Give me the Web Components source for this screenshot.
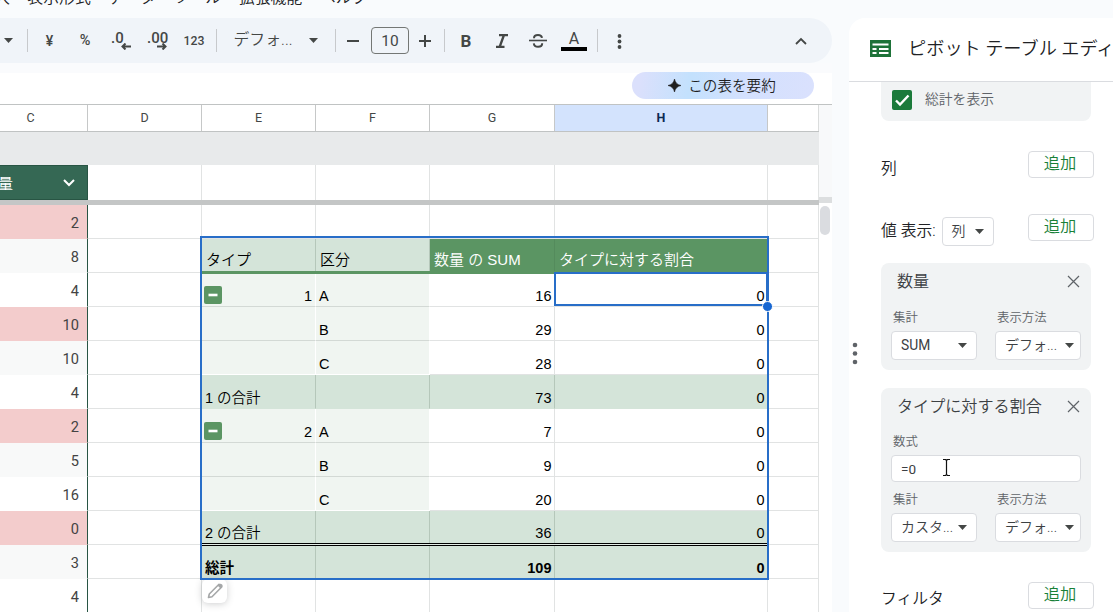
<!DOCTYPE html>
<html lang="ja">
<head>
<meta charset="utf-8">
<title>スプレッドシート</title>
<style>
  html, body {
    margin: 0;
    height: 612px;
    overflow: hidden;
  }
  body {
    background: #f9fbfd;
    color: #202124;
    font-family: Roboto, "Noto Sans CJK JP", sans-serif;
    font-weight: 350;
  }
</style>
</head>
<body>
<sheet-app>
  <menu-bar slot="menu"></menu-bar>
  <tool-bar slot="tools"></tool-bar>
  <summary-chip slot="chip">この表を要約</summary-chip>
  <sheet-grid slot="grid"></sheet-grid>
  <pivot-editor slot="side"></pivot-editor>
</sheet-app>

<script>
  const define = (name, html, setup) => {
    customElements.define(name, class extends HTMLElement {
      constructor() {
        super()
        this.attachShadow({ mode: 'open' })
      }

      connectedCallback() {
        this.shadowRoot.innerHTML = html
        if (setup) setup(this, this.shadowRoot)
      }
    })
  }

  define('drop-arrow', `
    <style>
      :host { display: block; flex: none; width: 9px; height: 5px; }
      svg { display: block; }
    </style>
    <svg width="9" height="5"><path d="M0 0h9L4.5 5z" fill="#444746"/></svg>
  `)

  define('menu-bar', `
    <style>
      :host {
        display: flex;
        gap: 17.5px;
        height: 18px;
        margin-left: -22px;
        font-size: 15.9px;
        line-height: 20px;
        white-space: nowrap;
        overflow: hidden;
      }
      span { margin-top: -12px; }
    </style>
    <span>挿入</span><span>表示形式</span><span>データ</span><span>ツール</span><span>拡張機能</span><span>ヘルプ</span>
  `)

  define('tool-bar', `
    <style>
      :host {
        display: flex;
        align-items: center;
        box-sizing: border-box;
        height: 45px;
        padding: 0 25px 0 4px;
        border-radius: 0 23px 23px 0;
        background: #f0f4f9;
        color: #444746;
        font: 500 14px/18px Roboto, "Noto Sans CJK JP", sans-serif;
        white-space: nowrap;
      }
      :host > * { flex: none; }
      i { width: 1px; height: 23px; background: #c7c9cc; }
      span { display: flex; justify-content: center; }
      svg { display: block; fill: none; stroke: #444746; stroke-width: 2; }
      .size {
        box-sizing: border-box;
        width: 38px;
        height: 27px;
        margin-left: 12px;
        border: 1px solid #747775;
        border-radius: 4px;
        align-items: center;
        font-size: 15.5px;
        font-weight: 400;
      }
      .digits { flex-direction: column; align-items: flex-start; height: 19px; line-height: 14px; font-size: 15px; }
      .digits svg { margin-top: -2px; flex: none; }
      .color { flex-direction: column; align-items: center; width: 26px; margin-left: 14px; font-size: 16px; font-weight: 400; }
      .color b { width: 26px; height: 4px; margin-top: -1px; background: #000; }
    </style>
    <drop-arrow></drop-arrow>
    <i style="margin-left:14px"></i>
    <span style="width:21px;margin-left:11px">¥</span>
    <span style="width:20px;margin-left:15px;font-size:14.5px">%</span>
    <span class="digits" style="width:22px;margin-left:16px">.0
      <svg style="margin-left:10px" width="10" height="7"><path d="M10 3.5H2M4.5 .5l-3 3 3 3"/></svg></span>
    <span class="digits" style="width:22px;margin-left:14px">.00
      <svg style="margin-left:10px" width="10" height="7"><path d="M0 3.5h8M5.5 .5l3 3-3 3"/></svg></span>
    <span style="width:26px;margin-left:12px;font-size:12.3px">123</span>
    <i style="margin-left:9px"></i>
    <span style="width:60px;margin:-2px 0 0 16px;font-size:15.9px;font-weight:350">デフォ...</span>
    <drop-arrow style="margin-left:16px"></drop-arrow>
    <i style="margin-left:17px"></i>
    <svg style="margin-left:11px" width="12" height="12"><path d="M0 6h12"/></svg>
    <span class="size">10</span>
    <svg style="margin-left:10px" width="12" height="12"><path d="M0 6h12M6 0v12"/></svg>
    <i style="margin-left:13px"></i>
    <span style="width:14px;margin-left:14px;font-size:17px;font-weight:700">B</span>
    <svg style="margin-left:22px" width="14" height="14"><path d="M4 1.2h9M1 12.8h8.500M8.800 1.500l-4 11" stroke-width="2.3"/></svg>
    <svg style="margin-left:20px" width="18" height="14" viewBox="0 0 18 14"><path d="M0 6.5h18" stroke-width="1.6"/><path d="M5 4.2C5 2 6.500 1 9 1s3.700 1 4 2.800M4.800 9.300c.3 2.400 1.800 3.500 4.300 3.500 2.600 0 4.100-1.200 4.100-3.500"/></svg>
    <span class="color">A<b></b></span>
    <i style="margin-left:10px"></i>
    <svg style="margin-left:19px" width="5" height="16"><g fill="#444746" stroke="none"><circle cx="2.5" cy="3" r="1.9"/><circle cx="2.5" cy="8.500" r="1.9"/><circle cx="2.5" cy="14" r="1.9"/></g></svg>
    <svg style="margin-left:auto" width="12" height="8"><path d="M1 7l5-5 5 5" stroke-width="1.8"/></svg>
  `)

  define('summary-chip', `
    <style>
      :host {
        display: flex;
        align-items: center;
        justify-content: center;
        gap: 7px;
        box-sizing: border-box;
        width: 182px;
        height: 27px;
        padding-right: 2px;
        border-radius: 14px;
        background: linear-gradient(100deg, #dbe0fc 5%, #c3e1fd 32%, #d3e0fe 62%, #dae1fd);
        font-size: 14.6px;
        line-height: 20px;
        color: #1f1f1f;
      }
    </style>
    <svg width="13" height="13"><path d="M6.500 0Q7.500 5.500 13 6.500 7.500 7.500 6.500 13 5.500 7.500 0 6.500 5.500 5.500 6.500 0z" fill="#1f1f1f" stroke="#1f1f1f" stroke-width=".6"/></svg>
    <slot></slot>
  `)

  define('sheet-app', `
    <style>
      :host { display: flex; height: 612px; }
      main { flex: none; width: 832px; }
      .strip {
        display: flex;
        justify-content: flex-end;
        box-sizing: border-box;
        height: 41px;
        padding: 9px 18px 0 0;
        background: linear-gradient(#fafbfd 10px, #fff 10px);
      }
      aside { flex: none; width: 264px; margin-left: 17px; padding-top: 18px; }
    </style>
    <main>
      <slot name="menu"></slot>
      <slot name="tools"></slot>
      <div class="strip"><slot name="chip"></slot></div>
      <slot name="grid"></slot>
    </main>
    <aside><slot name="side"></slot></aside>
  `)

  define('toggle-box', `
    <style>
      :host { display: block; width: 18px; height: 18px; border-radius: 2px; background: #5b9563; }
      svg { display: block; }
    </style>
    <svg width="18" height="18"><path d="M4.5 9h9" stroke="#fff" stroke-width="2.6"/></svg>
  `)

  define('sheet-cell', `
    <style>
      :host {
        display: flex;
        align-items: flex-end;
        justify-content: space-between;
        box-sizing: border-box;
        min-width: 0;
        padding: 0 3px;
        border-right: 1px solid #e1e3e3;
        border-bottom: 1px solid #e1e3e3;
        color: #000;
        font: 350 14.5px/20px "Liberation Sans", "Noto Sans CJK JP", sans-serif;
        white-space: nowrap;
      }
      :host([num]) { justify-content: flex-end; padding-right: 2.5px; }
      :host([kind~="key"]) { background: #f0f5f1; border-right-color: #fff; border-bottom-color: #d3d9d5; }
      :host([kind~="group"]) { padding: 0 3px 0 2px; }
      :host([kind~="last"]) { border-bottom-color: #fff; }
      :host([kind~="sub"]) { background: #d4e4d9; border-right-color: #b5c7ba; border-bottom-color: #d4e4d9; }
      :host([kind~="raised"]) { padding-bottom: 1px; }
      :host([kind~="measure"]) { background: #5b9563; border-color: #548b5c; color: #fff; }
      :host([kind~="head"]) { padding: 0 3px 2px 4px; font-size: 15px; }
      :host([kind~="total"]) { font-weight: 700; }
      :host([kind~="data"]) {
        align-items: center;
        justify-content: flex-end;
        padding: 2px 8px 0 0;
        border-right-color: #285544;
        border-bottom-color: transparent;
        color: #434343;
        font: 400 14.6px/20px Roboto, sans-serif;
      }
      :host([kind~="pink"]) { background: #f3cccc; }
      :host([kind~="alt"]) { background: #f8f9f9; }
    </style>
    <slot name="toggle"></slot><slot></slot>
  `)

  const columns = [['C', 88], ['D', 114], ['E', 114], ['F', 114], ['G', 125], ['H', 213], ['', 51]]

  // left table: value and band colour
  const amounts = [
    [2, 'pink'], [8, 'alt'], [4, ''], [10, 'pink'], [10, 'alt'], [4, ''],
    [2, 'pink'], [5, 'alt'], [16, ''], [0, 'pink'], [3, 'alt'], [4, '']
  ]

  // pivot rows, one for each sheet row: kind, type, section, sum, ratio
  const pivot = [
    null,
    ['head', 'タイプ', '区分', '数量 の SUM', 'タイプに対する割合'],
    ['item', '1', 'A', '16', '0'],
    ['item', '', 'B', '29', '0'],
    ['last', '', 'C', '28', '0'],
    ['sub', '1 の合計', '', '73', '0'],
    ['item', '2', 'A', '7', '0'],
    ['item', '', 'B', '9', '0'],
    ['last', '', 'C', '20', '0'],
    ['sub raised', '2 の合計', '', '36', '0'],
    ['sub total', '総計', '', '109', '0'],
    null
  ]

  const cell = (text = '', kind = '', num = false) =>
    `<sheet-cell kind="${kind}" ${num ? 'num' : ''}>${text}</sheet-cell>`

  const pivotCells = row => {
    if (!row) return cell().repeat(4)
    const [kind, type, section, sum, ratio] = row
    if (kind === 'head') {
      return cell(type, 'sub head') + cell(section, 'sub head') + cell(sum, 'measure head') + cell(ratio, 'measure head')
    }
    if (kind.startsWith('sub')) {
      return cell(type, kind) + cell(section, kind) + cell(sum, kind, true) + cell(ratio, kind, true)
    }
    const first = type
      ? cell(`<toggle-box slot="toggle" style="margin-bottom:2px"></toggle-box>${type}`, 'key group')
      : cell('', `key ${kind}`)
    return first + cell(section, `key ${kind}`) + cell(sum, '', true) + cell(ratio, '', true)
  }

  define('sheet-grid', `
    <style>
      :host { display: flex; position: relative; height: 508px; background: #fff; overflow: hidden; }
      .sheet { flex: none; width: 819px; }
      .row { display: grid; grid-template-columns: ${columns.map(c => c[1] + 'px').join(' ')}; }
      .names { height: 28px; box-sizing: border-box; border-top: 1px solid #c0c3c3; border-bottom: 1px solid #c0c3c3; }
      .names span {
        border-right: 1px solid #c6c8c8;
        color: #444746;
        font: 400 12.5px/25px Roboto, sans-serif;
        text-align: center;
      }
      .names span:first-child { padding-right: 26px; }
      .names span:last-child { border-color: #dadcdc; }
      .names .on { background: #d3e3fd; color: #0b2a52; font-weight: 700; }
      .band { height: 33px; background: #e8eaeb; }
      .fixed { height: 35px; }
      .fixed sheet-cell { border-bottom: 0; }
      .fixed .title {
        display: flex;
        align-items: center;
        box-sizing: border-box;
        border: 1px solid #285544;
        border-left: 0;
        background: #356854;
        color: #fff;
        font-size: 15px;
        font-weight: 400;
        line-height: 20px;
        overflow: hidden;
      }
      .title span { margin: 2px 0 0 -17px; }
      .title svg { margin-left: auto; margin-right: 12px; }
      .freeze { height: 5px; background: #c4c6c6; }
      .body .row { grid-auto-rows: 34px; }
      .scroll { flex: none; width: 13px; }
      .track { height: 93px; background: #f8f9fa; border-top: 1px solid #c0c3c3; box-sizing: border-box; }
      .stop { height: 6px; background: #dcdedf; }
      .thumb { width: 10px; height: 29px; margin: 3px 0 0 1px; border-radius: 5px; background: #dadce0; }
      /* marks drawn over the cells */
      .mark { position: absolute; box-sizing: border-box; }
      .rule { left: 202px; top: 167px; width: 353px; height: 3px; background: #5b9563; }
      .rule + .rule { left: 429px; width: 338px; }
      .double { left: 202px; top: 439px; width: 565px; height: 3px; border: solid #000; border-width: 1px 0; background: #e4eee7; }
      .range { left: 200px; top: 132px; width: 569px; height: 344px; border: 2px solid #286ec8; }
      .active { left: 554px; top: 168px; width: 214px; height: 34px; border: 2px solid #286ec8; }
      .knob { left: 762px; top: 197px; width: 11px; height: 11px; border: 1px solid #fff; border-radius: 50%; background: #1767d2; }
      .edit {
        display: flex;
        align-items: center;
        justify-content: center;
        left: 202px;
        top: 475px;
        width: 25px;
        height: 24px;
        border-radius: 6px;
        background: #fff;
        box-shadow: 0 1px 7px rgba(60, 64, 67, .25);
      }
    </style>
    <div class="sheet">
      <div class="row names">${columns.map(([name]) => `<span class="${name === 'H' ? 'on' : ''}">${name}</span>`).join('')}</div>
      <div class="band"></div>
      <div class="row fixed">
        <div class="title"><span>数量</span><svg width="12" height="8"><path d="M1 1l5 5 5-5" fill="none" stroke="#fff" stroke-width="2"/></svg></div>
        ${cell().repeat(6)}
      </div>
      <div class="freeze"></div>
      <div class="body">
        ${amounts.map(([n, band], i) => `<div class="row">${cell(n, `data ${band}`)}${cell()}${pivotCells(pivot[i])}${cell()}</div>`).join('')}
      </div>
    </div>
    <div class="scroll"><div class="track"></div><div class="stop"></div><div class="thumb"></div></div>
    <div class="mark rule"></div>
    <div class="mark rule"></div>
    <div class="mark double"></div>
    <div class="mark edit"><svg width="18" height="18"><path d="M2.500 15.500l.8-3.500L13 2.300l2.700 2.700L6 14.700z" fill="none" stroke="#a5a7a8" stroke-width="1.600" stroke-linejoin="round"/><path d="M11.500 3.500l3 3 2-2q.5-1-.4-2t-2.200-.8z" fill="#a5a7a8"/></svg></div>
    <div class="mark range"></div>
    <div class="mark active"></div>
    <div class="mark knob"></div>
  `)

  define('add-button', `
    <style>
      :host {
        display: block;
        box-sizing: border-box;
        width: 66px;
        height: 27px;
        padding-right: 2px;
        border: 1px solid #dadce0;
        border-radius: 4px;
        background: #fff;
        color: #188038;
        font-size: 16.3px;
        line-height: 24px;
        text-align: center;
      }
    </style>
    追加
  `)

  define('select-box', `
    <style>
      :host {
        display: flex;
        align-items: center;
        justify-content: space-between;
        box-sizing: border-box;
        width: 86px;
        height: 29px;
        padding: 0 6px 0 9px;
        border: 1px solid #dadce0;
        border-radius: 4px;
        background: #fff;
        color: #3c4043;
        font-size: 14px;
        line-height: 20px;
        white-space: nowrap;
      }
      slot { display: block; margin-top: -1px; }
      :host([latin]) { font-size: 13.8px; font-weight: 400; }
    </style>
    <slot></slot><drop-arrow></drop-arrow>
  `)

  define('value-card', `
    <style>
      :host {
        display: block;
        box-sizing: border-box;
        width: 210px;
        padding: 8px 10px 10px;
        border-radius: 8px;
        background: #f1f3f4;
        color: #3c4043;
      }
      header { display: flex; align-items: center; justify-content: space-between; height: 20px; padding: 0 0 0 6px; font-size: 16.1px; line-height: 20px; }
      header span { margin-top: 1px; }
      header svg { margin-right: 1px; }
      .fields { display: grid; grid-template-columns: 86px 86px; column-gap: 18px; }
      ::slotted(select-box:first-child) { padding-right: 9px; }
      label { height: 21px; padding-left: 2px; font-size: 12.4px; line-height: 16px; color: #5f6368; }
      .formula { display: none; }
      :host([formula]) .formula { display: block; margin-bottom: 10px; }
      .formula label { display: block; }
      .formula div {
        box-sizing: border-box;
        height: 27px;
        padding-left: 9px;
        border: 1px solid #dadce0;
        border-radius: 4px;
        background: #fff;
        font-size: 13.5px;
        line-height: 26px;
        font-weight: 400;
      }
      .body { padding-top: 19px; }
      :host([formula]) .body { padding-top: 18px; }
    </style>
    <header><span></span><svg width="13" height="13"><path d="M1 1l11 11M12 1L1 12" stroke="#5f6368" stroke-width="1.2"/></svg></header>
    <div class="body">
      <div class="formula"><label>数式</label><div></div></div>
      <div class="fields"><label>集計</label><label>表示方法</label><slot></slot></div>
    </div>
  `, (host, root) => {
    root.querySelector('header span').textContent = host.getAttribute('name')
    root.querySelector('.formula div').textContent = host.getAttribute('formula') || ''
  })

  define('pivot-editor', `
    <style>
      :host { display: block; position: relative; height: 594px; border-radius: 16px 0 0 0; background: #fff; }
      header {
        display: flex;
        align-items: center;
        gap: 17px;
        box-sizing: border-box;
        height: 64px;
        padding: 0 0 2px 21px;
        border-bottom: 1px solid #dadce0;
        font-size: 18.2px;
        line-height: 24px;
        white-space: nowrap;
        overflow: hidden;
      }
      header svg { flex: none; }
      section { padding-left: 32px; }
      .totals {
        display: flex;
        align-items: center;
        gap: 13px;
        box-sizing: border-box;
        width: 210px;
        height: 39px;
        padding: 0 0 3px 11px;
        border-radius: 0 0 8px 8px;
        background: #f1f3f4;
        color: #5f6368;
        font-size: 13.8px;
        line-height: 20px;
      }
      .totals span { margin-top: -2px; }
      .line { display: flex; align-items: center; width: 213px; font-size: 15.8px; line-height: 20px; }
      .line add-button { margin-left: auto; }
      .line select-box { width: 52px; margin: 3px 0 0 6px; padding-right: 9px; }
      .grip { position: absolute; left: 3px; top: 324px; }
      .caret { position: absolute; left: 93px; top: 441px; }
    </style>
    <header>
      <svg width="21" height="17"><path d="M0 0h21v17H0z" fill="#1e7239"/><path d="M2.500 4.500h16M2.500 9h4M9 9h9.500M2.500 13h4M9 13h9.500" stroke="#fff" stroke-width="1.800"/></svg>
      <span>ピボット テーブル エディタ</span>
    </header>
    <section>
      <div class="totals">
        <svg width="20" height="20"><rect width="20" height="20" rx="2" fill="#1b7a3b"/><path d="M4 10.500l4 4 8.500-9" fill="none" stroke="#fff" stroke-width="2.400"/></svg>
        <span>総計を表示</span>
      </div>
      <div class="line" style="height:27px;margin-top:30px"><span style="padding-top:8px">列</span><add-button></add-button></div>
      <div class="line" style="height:35px;margin-top:34px"><span style="padding-top:2px">値 表示:</span><select-box>列</select-box><add-button style="margin-top:-4px"></add-button></div>
      <value-card name="数量" style="height:107px;margin-top:16px">
        <select-box latin>SUM</select-box><select-box>デフォ...</select-box>
      </value-card>
      <value-card name="タイプに対する割合" formula="=0" style="height:164px;margin-top:18px">
        <select-box>カスタ...</select-box><select-box>デフォ...</select-box>
      </value-card>
      <div class="line" style="height:27px;margin-top:30px"><span style="padding-top:7px">フィルタ</span><add-button></add-button></div>
    </section>
    <svg class="grip" width="6" height="24" fill="#5f6368"><circle cx="3" cy="3" r="2.300"/><circle cx="3" cy="11.500" r="2.300"/><circle cx="3" cy="20" r="2.300"/></svg>
    <svg class="caret" width="9" height="17"><path d="M1 .5h2.500l1 1 1-1H8M1 16.500h2.500l1-1 1 1H8M4.500 1.500v14" fill="none" stroke="#111" stroke-width="1.200"/></svg>
  `)
</script>
</body>
</html>
